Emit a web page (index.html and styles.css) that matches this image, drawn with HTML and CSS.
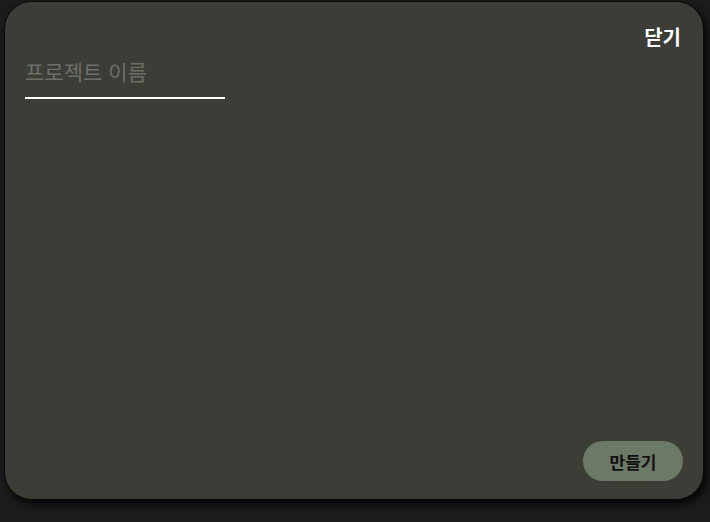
FILE: index.html
```html
<!DOCTYPE html>
<html lang="ko">
<head>
<meta charset="utf-8">
<link rel="stylesheet" href="styles.css">
</head>
<body>
<div class="card">
  <div class="top">
    <span class="close">닫기</span>
  </div>
  <div class="field">
    <input class="name" type="text" placeholder="프로젝트 이름">
  </div>
  <div class="spacer"></div>
  <div class="bottom">
    <button class="create">만들기</button>
  </div>
</div>
</body>
</html>
```
FILE: styles.css
```css
html, body {
  margin: 0;
  padding: 0;
  background: #1c1c1c;
  height: 100%;
}
body {
  padding: 1px 6px 0 4px;
  box-sizing: border-box;
  width: 710px;
  height: 522px;
  font-family: "Noto Sans CJK KR", "Noto Sans", sans-serif;
}
.card {
  box-sizing: border-box;
  width: 700px;
  height: 499px;
  background: #3c3d37;
  border: 1px solid #0a0a0a;
  border-radius: 28px;
  box-shadow: 3px 4px 8px rgba(0,0,0,0.9);
  display: flex;
  flex-direction: column;
  padding: 20px 22px 18px 20px;
}
.top {
  display: flex;
  justify-content: flex-end;
  height: 30px;
}
.close {
  color: #ffffff;
  font-weight: 700;
  font-size: 20px;
  line-height: 30px;
}
.field {
  margin-top: 4px;
}
.name {
  width: 200px;
  box-sizing: border-box;
  background: transparent;
  border: none;
  border-bottom: 2px solid #ffffff;
  padding: 0 0 11px 0;
  font-family: "Noto Sans CJK KR", "Noto Sans", sans-serif;
  font-size: 21px;
  color: #dddddd;
  outline: none;
}
.name::placeholder {
  color: #6e6e69;
}
.spacer {
  flex: 1;
}
.bottom {
  display: flex;
  justify-content: flex-end;
}
.create {
  width: 100px;
  height: 40px;
  border: none;
  border-radius: 20px;
  background: #6b7966;
  color: #111111;
  font-family: "Noto Sans CJK KR", "Noto Sans", sans-serif;
  font-weight: 700;
  font-size: 17px;
  margin-right: -2px;
}
```
